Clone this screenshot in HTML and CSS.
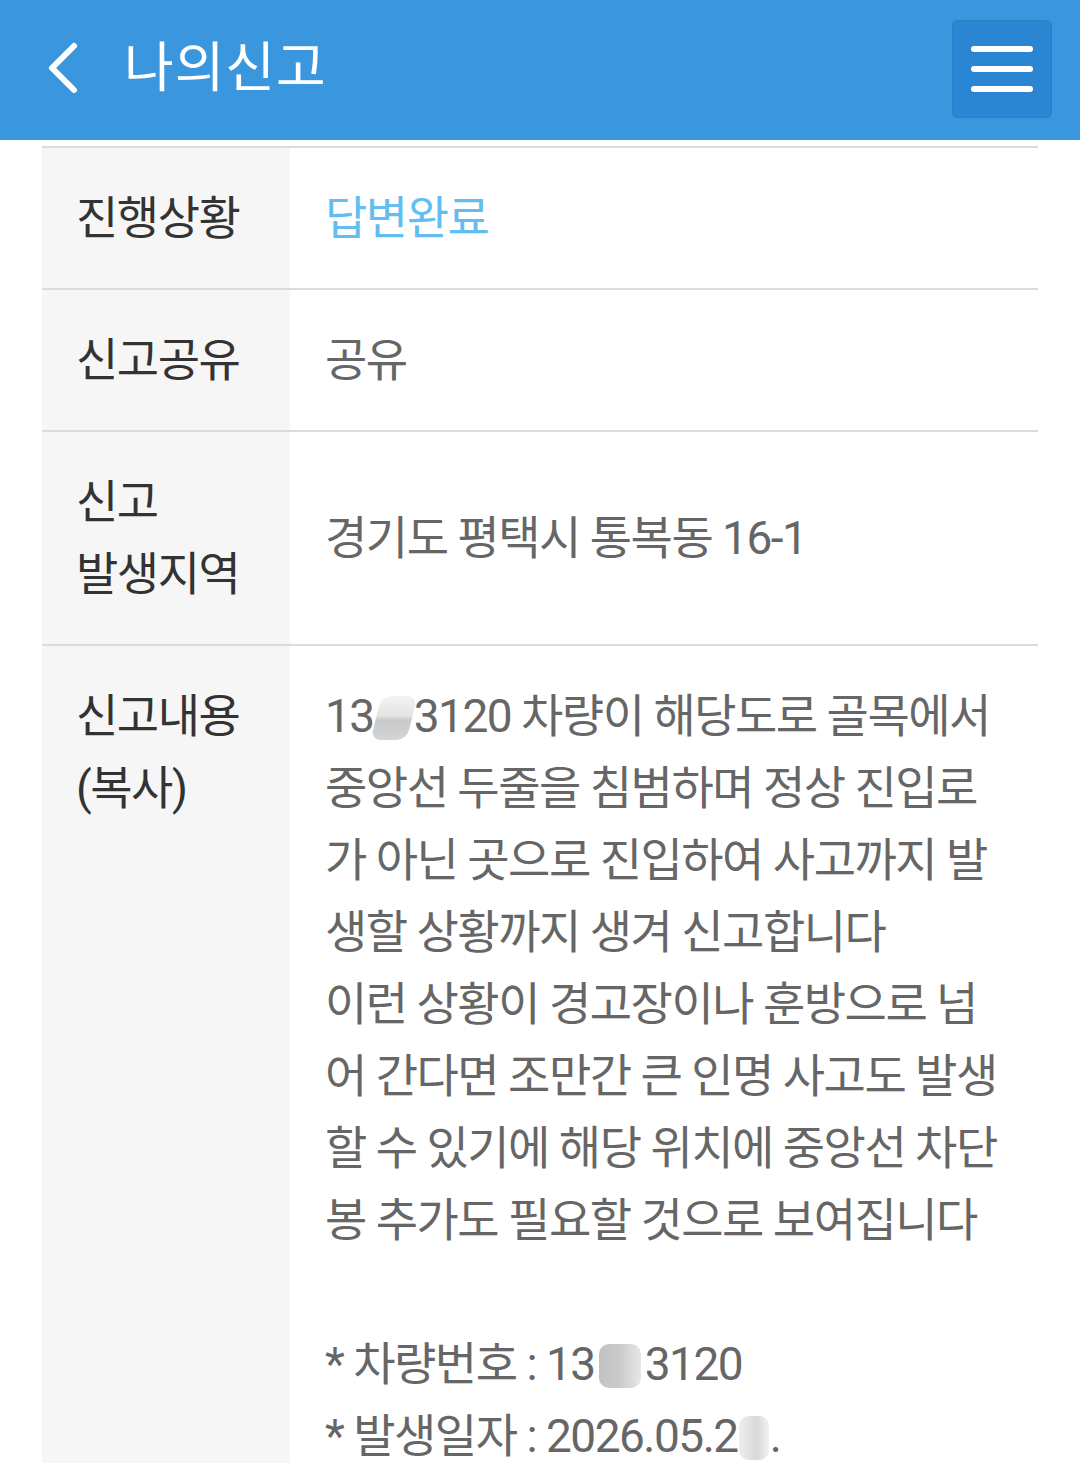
FILE: index.html
```html
<!DOCTYPE html>
<html lang="ko">
<head>
<meta charset="utf-8">
<title>나의신고</title>
<link rel="stylesheet" href="styles.css">
</head>
<body>
<header class="topbar">
  <div class="topbar-left">
    <svg class="back" width="40" height="60" viewBox="0 0 40 60"><polyline points="32,7 10,29 32,51" fill="none" stroke="#fff" stroke-width="6" stroke-linecap="round" stroke-linejoin="round"/></svg>
    <h1 class="title">나의신고</h1>
  </div>
  <button class="menu" aria-label="메뉴">
    <span class="bar"></span><span class="bar"></span><span class="bar"></span>
  </button>
</header>
<main class="detail">
  <div class="row">
    <div class="label">진행상황</div>
    <div class="value status">답변완료</div>
  </div>
  <div class="row">
    <div class="label">신고공유</div>
    <div class="value">공유</div>
  </div>
  <div class="row">
    <div class="label">신고<br>발생지역</div>
    <div class="value center">경기도 평택시 통복동 16-1</div>
  </div>
  <div class="row">
    <div class="label">신고내용<br>(복사)</div>
    <div class="value content">13<span class="blur b1"></span>3120 차량이 해당도로 골목에서<br>중앙선 두줄을 침범하며 정상 진입로<br>가 아닌 곳으로 진입하여 사고까지 발<br>생할 상황까지 생겨 신고합니다<br>이런 상황이 경고장이나 훈방으로 넘<br>어 간다면 조만간 큰 인명 사고도 발생<br>할 수 있기에 해당 위치에 중앙선 차단<br>봉 추가도 필요할 것으로 보여집니다<br><br>* 차량번호 : 13<span class="blur b2"></span>3120<br>* 발생일자 : 2026.05.2<span class="blur b3"></span>.</div>
  </div>
</main>
</body>
</html>
```
FILE: styles.css
```css
html, body {
  margin: 0;
  padding: 0;
  background: #fff;
}
body {
  font-family: "Roboto", "Noto Sans CJK KR", sans-serif;
  width: 1080px;
  height: 1463px;
  overflow: hidden;
}
.topbar {
  height: 140px;
  background: #3a97de;
  display: flex;
  align-items: center;
  justify-content: space-between;
  padding: 0 28px 0 42px;
  box-sizing: border-box;
}
.topbar-left {
  display: flex;
  align-items: center;
  gap: 42px;
  margin-top: -2px;
}
.back { display: block; }
.title {
  margin: 0;
  color: #fff;
  font-weight: 400;
  font-size: 54px;
  letter-spacing: 1px;
  line-height: 1;
}
.menu {
  width: 100px;
  height: 98px;
  margin-top: -2px;
  background: #2a86d2;
  border: 1px solid #2a7fc8;
  border-radius: 5px;
  display: flex;
  flex-direction: column;
  align-items: center;
  justify-content: center;
  gap: 14px;
  padding: 0;
}
.menu .bar {
  width: 62px;
  height: 6px;
  background: #fff;
  border-radius: 3px;
}
.detail {
  margin: 6px 42px 0;
  border-top: 2px solid #dcdcdc;
}
.row {
  display: flex;
  border-bottom: 2px solid #dcdcdc;
}
.label, .value {
  font-size: 46px;
  line-height: 72px;
  letter-spacing: -1.5px;
  padding: 34px 0 34px 34px;
}
.label {
  width: 248px;
  box-sizing: border-box;
  flex: none;
  background: #f6f6f6;
  color: #333;
}
.value {
  flex: 1;
  color: #666;
  padding-left: 35px;
  white-space: nowrap;
}
.value.center {
  display: flex;
  align-items: center;
}
.status { color: #64bdf1; }
.blur {
  display: inline-block;
  vertical-align: -8px;
  height: 44px;
  border-radius: 10px;
}
.b1 {
  width: 36px;
  margin: 0 2px;
  background: linear-gradient(180deg, #f3f3f3 0%, #e4e4e4 45%, #c9c9c9 55%, #d4d4d4 100%);
  transform: skewX(-14deg);
}
.b2 {
  width: 42px;
  margin: 0 4px;
  background: linear-gradient(90deg, #c2c2c2 0%, #cbcbcb 50%, #e7e7e7 100%);
}
.b3 {
  width: 30px;
  margin: 0 1px;
  background: linear-gradient(90deg, #eeeeee 0%, #d9d9d9 60%, #f1f1f1 100%);
}
```
